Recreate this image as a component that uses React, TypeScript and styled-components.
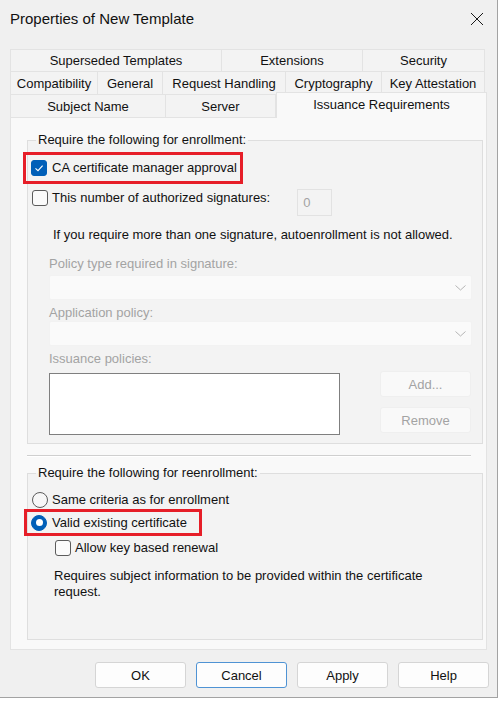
import React from "react";
import styled, { createGlobalStyle, css } from "styled-components";

const GlobalStyle = createGlobalStyle`
  html, body { margin: 0; padding: 0; background: #ffffff; }
  body {
    font-family: "Liberation Sans", Arial, sans-serif;
    font-size: 13px;
    color: #111111;
  }
  * { box-sizing: border-box; }
`;

const Window = styled.div`
  width: 498px;
  height: 698px;
  background: #f0f0f0;
  border-right: 1px solid #a3a3a3;
  border-bottom: 1px solid #a3a3a3;
  display: flex;
  flex-direction: column;
`;

const TitleBar = styled.div`
  height: 38px;
  flex-shrink: 0;
  display: flex;
  align-items: center;
  justify-content: space-between;
  padding: 0 13px 1px 10px;
`;

const Title = styled.span`
  font-size: 15px;
  color: #111111;
`;

const CloseButton = styled.div`
  width: 14px;
  height: 14px;
  display: flex;
`;

const Tabs = styled.div`
  margin: 11px 0 0 10px;
  width: 475px;
  display: flex;
  flex-direction: column;
`;

const TabRow = styled.div<{ $cols: string; $h: number }>`
  display: grid;
  grid-template-columns: ${(p) => p.$cols};
  height: ${(p) => p.$h}px;
`;

const Tab = styled.div<{ $active?: boolean }>`
  display: flex;
  align-items: center;
  justify-content: center;
  white-space: nowrap;
  background: #f3f3f3;
  border-top: 1px solid #e3e3e3;
  border-right: 1px solid #e3e3e3;
  color: #111111;
  &:first-child {
    border-left: 1px solid #e3e3e3;
  }
  ${(p) =>
    p.$active &&
    css`
      background: #f9f9f9;
      margin: -2px -2px -1px 0;
      padding-bottom: 3px;
      border-left: 1px solid #e3e3e3;
      position: relative;
      z-index: 1;
    `}
`;

const Panel = styled.div`
  margin-left: 10px;
  width: 477px;
  height: 533px;
  background: #f9f9f9;
  border: 1px solid #e3e3e3;
  padding: 14px 3px 9px 16px;
  display: flex;
  flex-direction: column;
`;

const Group = styled.fieldset<{ $grow?: boolean }>`
  margin: 0;
  padding: 0 4px 8px 4px;
  border: 1px solid #dedede;
  background: #f3f3f3;
  min-width: 0;
  display: flex;
  flex-direction: column;
  ${(p) => p.$grow && "flex: 1;"}
`;

const Legend = styled.legend`
  padding: 0 2px;
  margin-left: 4px;
  line-height: 16px;
  color: #111111;
`;

const RedBox = styled.div<{ $left: number; $right: number; $h: number; $mt: number }>`
  align-self: flex-start;
  display: flex;
  align-items: center;
  gap: 5px;
  height: ${(p) => p.$h}px;
  margin-top: ${(p) => p.$mt}px;
  margin-left: ${(p) => -p.$left}px;
  border: 3px solid #e61e28;
  padding: 0 ${(p) => p.$right}px 0 ${(p) => p.$left - 4}px;
`;

const Row = styled.div<{ $mt: number; $indent?: number }>`
  display: flex;
  align-items: center;
  gap: 4px;
  height: 16px;
  margin-top: ${(p) => p.$mt}px;
  padding-left: ${(p) => p.$indent ?? 0}px;
`;

const SigRow = styled.div`
  display: flex;
  align-items: flex-start;
  gap: 4px;
  margin-top: 5px;
  height: 27px;
  > :first-child {
    margin-top: 1px;
  }
`;

const Label = styled.span<{ $disabled?: boolean }>`
  line-height: 16px;
  white-space: nowrap;
  color: ${(p) => (p.$disabled ? "#a3a3a3" : "#111111")};
`;

const SigLabel = styled(Label)`
  margin-top: 1px;
`;

const NumberBox = styled.div`
  margin-left: 23px;
  width: 35px;
  height: 27px;
  border: 1px solid #e2e2e2;
  color: #a3a3a3;
  display: flex;
  align-items: center;
  padding-left: 5px;
`;

const Text = styled.div<{ $mt: number; $indent: number; $disabled?: boolean; $maxw?: number }>`
  margin-top: ${(p) => p.$mt}px;
  padding-left: ${(p) => p.$indent}px;
  line-height: 16px;
  color: ${(p) => (p.$disabled ? "#a3a3a3" : "#111111")};
  ${(p) => p.$maxw && `max-width: ${p.$maxw}px;`}
`;

const Combo = styled.div<{ $mt: number }>`
  margin: ${(p) => p.$mt}px 0 0 17px;
  width: 423px;
  height: 25px;
  background: #fafafa;
  border: 1px solid #f2f2f2;
  border-radius: 2px;
  display: flex;
  align-items: center;
  justify-content: flex-end;
  padding-right: 5px;
`;

const ListRow = styled.div`
  margin: 4px 0 0 17px;
  display: flex;
  align-items: flex-start;
`;

const ListBox = styled.div`
  margin-top: 2px;
  width: 291px;
  height: 62px;
  background: #ffffff;
  border: 1px solid #7f7f7f;
`;

const SideButtons = styled.div`
  margin-left: 40px;
  display: flex;
  flex-direction: column;
  gap: 10px;
`;

const DisabledButton = styled.div`
  width: 91px;
  height: 26px;
  background: #f9f9f9;
  border: 1px solid #efefef;
  border-radius: 3px;
  color: #a3a3a3;
  display: flex;
  align-items: center;
  justify-content: center;
`;

const Separator = styled.div`
  margin: 11px 12px 0 0;
  height: 2px;
  border-top: 1px solid #cfcfcf;
  border-bottom: 1px solid #ffffff;
`;

const Group2Wrap = styled.div`
  margin-top: 8px;
  flex: 1;
  display: flex;
  flex-direction: column;
`;

const CheckBoxBox = styled.div<{ $checked?: boolean }>`
  width: 16px;
  height: 16px;
  flex-shrink: 0;
  border-radius: 3px;
  display: flex;
  align-items: center;
  justify-content: center;
  ${(p) =>
    p.$checked
      ? css`
          background: #005fb8;
          border: 1px solid #005fb8;
        `
      : css`
          background: #fbfbfb;
          border: 1px solid #5c5c5c;
        `}
`;

const RadioCircle = styled.div<{ $checked?: boolean }>`
  width: 16px;
  height: 16px;
  flex-shrink: 0;
  border-radius: 50%;
  display: flex;
  align-items: center;
  justify-content: center;
  ${(p) =>
    p.$checked
      ? css`
          background: #005fb8;
          border: 1px solid #005fb8;
          &::after {
            content: "";
            width: 7px;
            height: 7px;
            border-radius: 50%;
            background: #ffffff;
          }
        `
      : css`
          background: #f7f7f7;
          border: 1px solid #5c5c5c;
        `}
`;

const Footer = styled.div`
  margin-top: 12px;
  display: flex;
  justify-content: flex-end;
  gap: 10px;
  padding-right: 8px;
`;

const DialogButton = styled.div<{ $default?: boolean }>`
  width: 91px;
  height: 26px;
  background: #fdfdfd;
  border: 1px solid ${(p) => (p.$default ? "#4f93d4" : "#d5d5d5")};
  border-radius: 3px;
  display: flex;
  align-items: center;
  justify-content: center;
  color: #111111;
`;

const CheckBox = ({ checked }: { checked?: boolean }) => (
  <CheckBoxBox $checked={checked}>
    {checked && (
      <svg width="12" height="12" viewBox="0 0 12 12">
        <polyline points="2.5,6.3 5,8.6 9.6,3.6" fill="none" stroke="#ffffff" strokeWidth="1.1" />
      </svg>
    )}
  </CheckBoxBox>
);

const Chevron = () => (
  <svg width="11" height="6" viewBox="0 0 11 6">
    <polyline points="0.5,0.5 5.5,5 10.5,0.5" fill="none" stroke="#b5b5b5" strokeWidth="1" />
  </svg>
);

export default function App() {
  return (
    <>
      <GlobalStyle />
      <Window>
        <TitleBar>
          <Title>Properties of New Template</Title>
          <CloseButton>
            <svg width="14" height="14" viewBox="0 0 14 14">
              <path d="M1 1 L13 13 M13 1 L1 13" stroke="#1a1a1a" strokeWidth="1" fill="none" />
            </svg>
          </CloseButton>
        </TitleBar>

        <Tabs>
          <TabRow $cols="212px 141px 122px" $h={22}>
            <Tab>Superseded Templates</Tab>
            <Tab>Extensions</Tab>
            <Tab>Security</Tab>
          </TabRow>
          <TabRow $cols="88px 65px 123px 96px 103px" $h={23}>
            <Tab>Compatibility</Tab>
            <Tab>General</Tab>
            <Tab>Request Handling</Tab>
            <Tab>Cryptography</Tab>
            <Tab>Key Attestation</Tab>
          </TabRow>
          <TabRow $cols="156px 110px 209px" $h={23}>
            <Tab>Subject Name</Tab>
            <Tab>Server</Tab>
            <Tab $active>Issuance Requirements</Tab>
          </TabRow>
        </Tabs>

        <Panel>
          <Group>
            <Legend>Require the following for enrollment:</Legend>
            <RedBox $left={9} $right={3} $h={32} $mt={4}>
              <CheckBox checked />
              <Label>CA certificate manager approval</Label>
            </RedBox>
            <SigRow>
              <CheckBox />
              <SigLabel>This number of authorized signatures:</SigLabel>
              <NumberBox>0</NumberBox>
            </SigRow>
            <Text $mt={11} $indent={21}>
              If you require more than one signature, autoenrollment is not allowed.
            </Text>
            <Text $mt={13} $indent={17} $disabled>
              Policy type required in signature:
            </Text>
            <Combo $mt={3}>
              <Chevron />
            </Combo>
            <Text $mt={5} $indent={17} $disabled>
              Application policy:
            </Text>
            <Combo $mt={0}>
              <Chevron />
            </Combo>
            <Text $mt={5} $indent={17} $disabled>
              Issuance policies:
            </Text>
            <ListRow>
              <ListBox />
              <SideButtons>
                <DisabledButton>Add...</DisabledButton>
                <DisabledButton>Remove</DisabledButton>
              </SideButtons>
            </ListRow>
          </Group>

          <Separator />

          <Group2Wrap>
            <Group $grow>
              <Legend>Require the following for reenrollment:</Legend>
              <Row $mt={11}>
                <RadioCircle />
                <Label>Same criteria as for enrollment</Label>
              </Row>
              <RedBox $left={8} $right={12} $h={27} $mt={1}>
                <RadioCircle $checked />
                <Label>Valid existing certificate</Label>
              </RedBox>
              <Row $mt={4} $indent={23}>
                <CheckBox />
                <Label>Allow key based renewal</Label>
              </Row>
              <Text $mt={12} $indent={22} $maxw={420}>
                Requires subject information to be provided within the certificate request.
              </Text>
            </Group>
          </Group2Wrap>
        </Panel>

        <Footer>
          <DialogButton>OK</DialogButton>
          <DialogButton $default>Cancel</DialogButton>
          <DialogButton>Apply</DialogButton>
          <DialogButton>Help</DialogButton>
        </Footer>
      </Window>
    </>
  );
}
